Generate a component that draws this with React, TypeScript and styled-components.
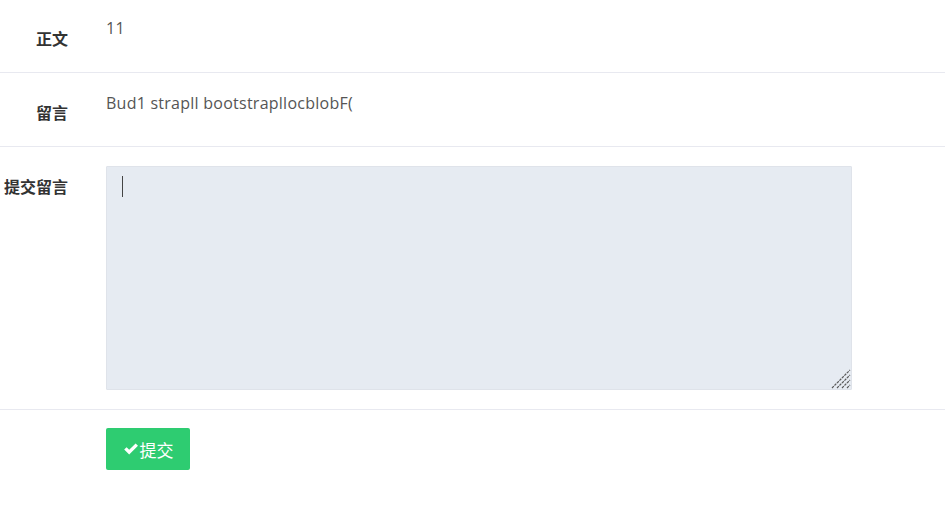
import React from "react";
import styled, { createGlobalStyle } from "styled-components";

const Global = createGlobalStyle`
  html, body { margin: 0; padding: 0; background: #fff; }
  body { font-family: "Open Sans", "Noto Sans CJK SC", sans-serif; color: #555; }
`;

const Form = styled.div`
  width: 945px;
`;

const Row = styled.div<{ $h: number; $last?: boolean }>`
  display: grid;
  grid-template-columns: 68px 1fr;
  column-gap: 38px;
  height: ${(p) => p.$h}px;
  border-bottom: ${(p) => (p.$last ? "none" : "1px solid #e8e9f0")};
  box-sizing: content-box;
`;

const Label = styled.div<{ $top: number }>`
  text-align: right;
  font-family: "Noto Sans CJK SC", sans-serif;
  font-weight: 700;
  font-size: 16px;
  line-height: 20px;
  color: #333;
  padding-top: ${(p) => p.$top}px;
  white-space: nowrap;
`;

const Value = styled.div<{ $top: number }>`
  font-size: 16px;
  line-height: 20px;
  letter-spacing: 0.25px;
  color: #555;
  padding-top: ${(p) => p.$top}px;
`;

const Cell = styled.div<{ $top: number }>`
  padding-top: ${(p) => p.$top}px;
`;

const AreaWrap = styled.div`
  position: relative;
  width: 746px;
  height: 224px;
`;

const TextArea = styled.textarea`
  display: block;
  width: 100%;
  height: 100%;
  box-sizing: border-box;
  margin: 0;
  padding: 9px 15px;
  background: #e6ebf2;
  border: 1px solid #dfe3ea;
  border-radius: 1px;
  font-family: "Open Sans", sans-serif;
  font-size: 16px;
  line-height: 22px;
  color: #555;
  caret-color: #444;
  outline: none;
  resize: none;
`;

const Caret = styled.span`
  position: absolute;
  left: 16px;
  top: 10px;
  width: 1px;
  height: 21px;
  background: #444;
  pointer-events: none;
`;

const Grip = styled.svg`
  position: absolute;
  right: 1px;
  bottom: 1px;
  pointer-events: none;
`;

const Button = styled.button`
  display: inline-flex;
  align-items: center;
  justify-content: center;
  gap: 1px;
  width: 84px;
  height: 42px;
  margin: 0;
  padding: 0;
  border: none;
  border-radius: 2px;
  background: #2ecc71;
  color: #fff;
  font-family: "Noto Sans CJK SC", sans-serif;
  font-size: 17px;
  cursor: pointer;
`;

const Check = () => (
  <svg width="16" height="14" viewBox="0 0 16 14" aria-hidden>
    <path d="M1.2 7.6 L3.6 5.2 L6.2 7.8 L12.6 1.4 L15 3.8 L6.2 12.6 Z" fill="#fff" />
  </svg>
);

export default function App() {
  return (
    <>
      <Global />
      <Form>
        <Row $h={72}>
          <Label $top={28}>正文</Label>
          <Value $top={18}>11</Value>
        </Row>
        <Row $h={73}>
          <Label $top={29}>留言</Label>
          <Value $top={20}>Bud1 strapll bootstrapllocblobF(</Value>
        </Row>
        <Row $h={262}>
          <Label $top={29}>提交留言</Label>
          <Cell $top={19}>
            <AreaWrap>
              <TextArea />
              <Caret />
              <Grip width="20" height="20" viewBox="0 0 20 20" aria-hidden>
                <g stroke="#5a5a5a" strokeWidth="1.2" strokeDasharray="2.6 0.9" strokeLinecap="butt">
                  <line x1="1" y1="19" x2="19" y2="1" />
                  <line x1="6" y1="19" x2="19" y2="6" />
                  <line x1="11" y1="19" x2="19" y2="11" />
                  <line x1="16" y1="19" x2="19" y2="16" />
                </g>
              </Grip>
            </AreaWrap>
          </Cell>
        </Row>
        <Row $h={97} $last>
          <div />
          <Cell $top={18}>
            <Button>
              <Check />
              提交
            </Button>
          </Cell>
        </Row>
      </Form>
    </>
  );
}
